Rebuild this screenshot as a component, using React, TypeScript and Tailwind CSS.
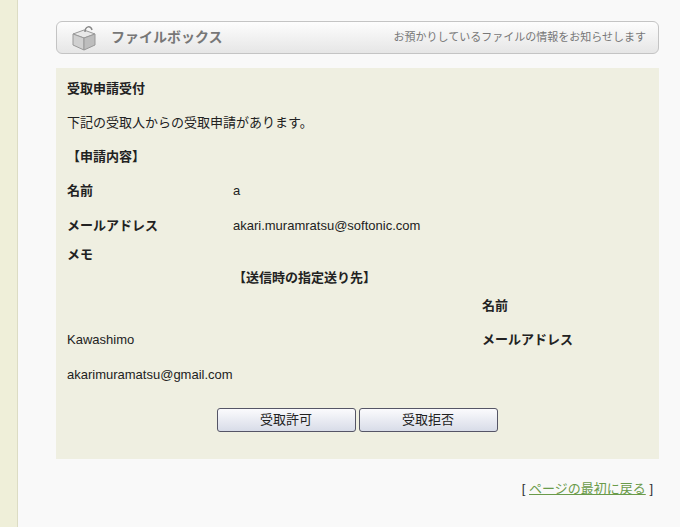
const f = { fontFamily: '"Liberation Sans", "Noto Sans CJK JP", sans-serif' }

function BoxIcon() {
  return (
    <svg width="30" height="26" viewBox="0 0 30 26">
      <path d="M4 9 L15 5 L26 9 L15 13 Z" fill="#e8e8e8" stroke="#999" />
      <path d="M4 9 L15 13 L15 25 L4 20 Z" fill="#d0d0d0" stroke="#999" />
      <path d="M15 13 L26 9 L26 20 L15 25 Z" fill="#bdbdbd" stroke="#999" />
      <path d="M16 7 C16 1 22 0 23 5" fill="none" stroke="#888" strokeWidth="1.5" />
    </svg>
  )
}

export default function App() {
  return (
    <div className="flex min-h-[527px] bg-[#f9f9f9] text-[13px] text-[#222] overflow-hidden" style={f}>
      <div className="w-[18px] bg-[#efefd9] border-r border-[#dcdcc4]" />
      <div className="w-[603px] ml-[38px]">
        <div className="mt-[21px] h-[33px] flex items-center justify-between rounded-md border border-[#c4c4c4] bg-gradient-to-b from-[#fdfdfd] to-[#e6e6e6] px-3">
          <div className="flex items-center gap-3">
            <BoxIcon />
            <span className="font-bold text-[14px] text-[#777]">ファイルボックス</span>
          </div>
          <span className="text-[11px] text-[#777]">お預かりしているファイルの情報をお知らせします</span>
        </div>
        <div className="mt-[14px] bg-[#efefe1] px-[11px] pt-[4px] pb-[27px]">
          <div className="h-[34px] flex items-center font-bold">受取申請受付</div>
          <div className="h-[34px] flex items-center">下記の受取人からの受取申請があります。</div>
          <div className="h-[34px] flex items-center font-bold">【申請内容】</div>
          <div className="grid grid-cols-[166px_249px_1fr]">
            <div className="h-[34px] flex items-center font-bold">名前</div>
            <div className="h-[34px] flex items-center col-span-2">a</div>
            <div className="h-[35px] flex items-center font-bold">メールアドレス</div>
            <div className="h-[35px] flex items-center col-span-2">akari.muramratsu@softonic.com</div>
            <div className="h-[24px] flex items-center font-bold">メモ</div>
            <div className="col-span-2" />
            <div />
            <div className="h-[22px] flex items-center font-bold col-span-2">【送信時の指定送り先】</div>
            <div className="h-[34px] col-span-2" />
            <div className="h-[34px] flex items-center font-bold">名前</div>
            <div className="h-[34px] flex items-center col-span-2">Kawashimo</div>
            <div className="h-[34px] flex items-center font-bold">メールアドレス</div>
            <div className="h-[36px] flex items-center col-span-3">akarimuramatsu@gmail.com</div>
          </div>
          <div className="mt-[15px] flex justify-center gap-[3px] pr-[1px]">
            {["受取許可", "受取拒否"].map(t => (
              <button key={t} className="w-[139px] h-[24px] rounded-[3px] border border-[#556] bg-gradient-to-b from-[#fbfbfd] to-[#d8dce8] text-[13px]">{t}</button>
            ))}
          </div>
        </div>
        <div className="mt-[20px] text-right pr-[6px] text-[13px] text-[#333]">
          [ <a className="underline text-[#6a9b4a]">ページの最初に戻る</a> ]
        </div>
      </div>
    </div>
  )
}
